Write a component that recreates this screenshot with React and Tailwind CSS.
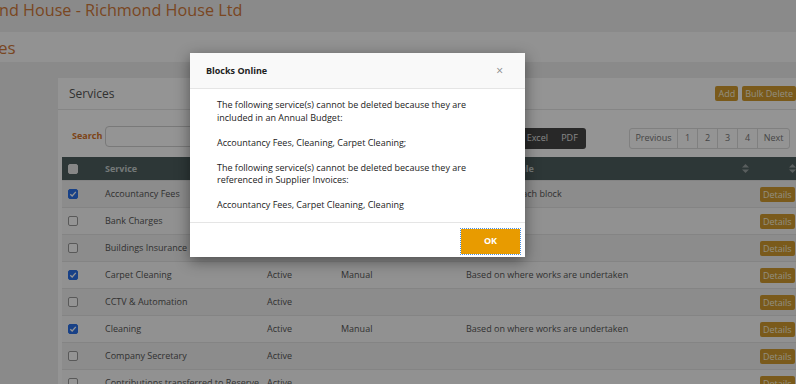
import React from 'react';

const rows = [
  { name: 'Accountancy Fees', checked: true, status: 'Active', type: 'Manual', desc: 'Equally into each block' },
  { name: 'Bank Charges', checked: false, status: 'Active', type: '', desc: '' },
  { name: 'Buildings Insurance', checked: false, status: 'Active', type: '', desc: '' },
  { name: 'Carpet Cleaning', checked: true, status: 'Active', type: 'Manual', desc: 'Based on where works are undertaken' },
  { name: 'CCTV & Automation', checked: false, status: 'Active', type: '', desc: '' },
  { name: 'Cleaning', checked: true, status: 'Active', type: 'Manual', desc: 'Based on where works are undertaken' },
  { name: 'Company Secretary', checked: false, status: 'Active', type: '', desc: '' },
  { name: 'Contributions transferred to Reserve', checked: false, status: 'Active', type: '', desc: '' },
];

const SortIcon = () => (
  <svg width="7" height="9" viewBox="0 0 7 9" className="text-[#9aa3a3]">
    <path d="M3.5 0 L7 3.6 H0 Z" fill="currentColor" />
    <path d="M3.5 9 L7 5.4 H0 Z" fill="currentColor" />
  </svg>
);

const Check = ({ checked, dark }) => (
  <span
    className={`flex items-center justify-center w-[10px] h-[10px] rounded-[2px] border ${
      checked
        ? 'bg-[#2a70e8] border-[#2a70e8]'
        : dark
        ? 'bg-[#e8e8e8] border-[#e8e8e8]'
        : 'bg-white border-[#9a9a9a]'
    }`}
  >
    {checked && (
      <svg width="8" height="8" viewBox="0 0 8 8">
        <path d="M1.3 4.2 L3.2 6 L6.8 1.9" stroke="white" strokeWidth="1.3" fill="none" />
      </svg>
    )}
  </span>
);

const GoldButton = ({ children }) => (
  <button className="h-[15px] px-[3px] bg-[#d29c30] text-[#fbf3dc] text-[9px] leading-none rounded-[2px]">{children}</button>
);

export default function App() {
  return (
    <div className="relative w-[796px] h-[384px] overflow-hidden bg-[#eeeeee] font-['Open_Sans',sans-serif]">
      {/* page title */}
      <div className="h-[32px] whitespace-nowrap text-[16.2px] leading-[20px] text-[#d27a3a] -ml-[1px]">
        nd House - Richmond House Ltd
      </div>
      <div className="h-[30px] bg-[#fcfcfc] flex items-center text-[17px] leading-none text-[#d27a3a] -ml-[2px]">
        es
      </div>

      {/* panel */}
      <div className="ml-[58px] mt-[16px] w-[760px] bg-white">
        <div className="h-[32px] flex items-center justify-between pl-[11px] pr-[22px] border-b border-[#e6e6e6]">
          <span className="text-[12px] text-[#555]">Services</span>
          <div className="flex gap-[4px]">
            <GoldButton>Add</GoldButton>
            <GoldButton>Bulk Delete</GoldButton>
          </div>
        </div>

        <div className="pt-[14px] pl-[4px]">
          <div className="flex items-center h-[24px] whitespace-nowrap">
            <span className="shrink-0 w-[43px] pl-[10px] text-[9px] font-bold text-[#d8742a]">Search</span>
            <div className="shrink-0 w-[300px] h-[21px] border border-[#d0d0d0] rounded-[4px]" />
            <div className="shrink-0 w-[135px] ml-[46px] mt-[4px] flex h-[21px] bg-[#454545] rounded-[3px] text-[9px] text-[#e6e6e6] items-center justify-end">
              <span className="px-[8px]">Copy</span>
              <span className="px-[8px]">CSV</span>
              <span className="px-[5px]">Excel</span>
              <span className="w-[33px] text-center">PDF</span>
            </div>
            <div className="shrink-0 ml-[43px] mt-[4px] flex h-[21px] border border-[#dcdcdc] rounded-[3px] text-[9px] text-[#777] items-stretch">
              <span className="w-[48px] flex items-center justify-center border-r border-[#dcdcdc]">Previous</span>
              <span className="w-[20px] flex items-center justify-center border-r border-[#dcdcdc]">1</span>
              <span className="w-[20px] flex items-center justify-center border-r border-[#dcdcdc]">2</span>
              <span className="w-[20px] flex items-center justify-center border-r border-[#dcdcdc]">3</span>
              <span className="w-[20px] flex items-center justify-center border-r border-[#dcdcdc]">4</span>
              <span className="w-[31px] flex items-center justify-center">Next</span>
            </div>
          </div>

          {/* table */}
          <div className="mt-[9px] text-[9px]">
            <div className="flex items-center h-[23px] bg-[#4f5f5f] text-[#c8d0d0] font-bold">
              <div className="w-[33px] pl-[6px]"><Check dark /></div>
              <div className="w-[162px] pl-[10px]">Service</div>
              <div className="w-[74px] pl-[10px]">Status</div>
              <div className="w-[125px] pl-[10px]">Type</div>
              <div className="w-[300px] pl-[10px] flex items-center justify-between pr-[7px]">
                <span>Allocation Rule</span>
                <SortIcon />
              </div>
              <div className="flex-1 flex justify-end pr-[22px]"><SortIcon /></div>
            </div>
            {rows.map((r, i) => (
              <div
                key={r.name}
                className={`flex items-center h-[27px] text-[#555] border-t border-[#e4e4e4] ${
                  i % 2 === 1 ? 'bg-[#fafafa]' : 'bg-[#f1f1f1]'
                }`}
              >
                <div className="w-[33px] pl-[6px]"><Check checked={r.checked} /></div>
                <div className="w-[162px] pl-[10px] whitespace-nowrap">{r.name}</div>
                <div className="w-[74px] pl-[10px]">{r.status}</div>
                <div className="w-[125px] pl-[10px]">{r.type}</div>
                <div className="w-[300px] pl-[10px] whitespace-nowrap">{r.desc}</div>
                <div className="pl-[4px]">
                  <GoldButton>Details</GoldButton>
                </div>
              </div>
            ))}
          </div>
        </div>
      </div>

      {/* modal backdrop */}
      <div className="absolute inset-0 bg-black/[0.42]" />

      {/* dialog */}
      <div className="absolute left-[190px] top-[53px] w-[335px] bg-white shadow-[0_4px_14px_rgba(0,0,0,0.45)] text-[#222]">
        <div className="h-[36px] flex items-center justify-between pl-[16px] pr-[22px] bg-[#f9f9f9] border-b border-[#e5e5e5]">
          <span className="text-[9px] font-bold">Blocks Online</span>
          <span className="text-[12px] leading-none text-[#888]">×</span>
        </div>
        <div className="pt-[10px] pb-[10px] pl-[27px] text-[9px] leading-[12.5px]">
          The following service(s) cannot be deleted because they are
          <br />
          included in an Annual Budget:
          <br />
          <br />
          Accountancy Fees, Cleaning, Carpet Cleaning;
          <br />
          <br />
          The following service(s) cannot be deleted because they are
          <br />
          referenced in Supplier Invoices:
          <br />
          <br />
          Accountancy Fees, Carpet Cleaning, Cleaning
        </div>
        <div className="h-[35px] border-t border-[#e5e5e5] flex items-start justify-end pt-[6px] pr-[5px]">
          <button className="w-[59px] h-[25px] bg-[#e89b00] text-white text-[9px] font-bold outline-1 outline-dotted outline-[#4a90e2]">
            OK
          </button>
        </div>
      </div>
    </div>
  );
}
